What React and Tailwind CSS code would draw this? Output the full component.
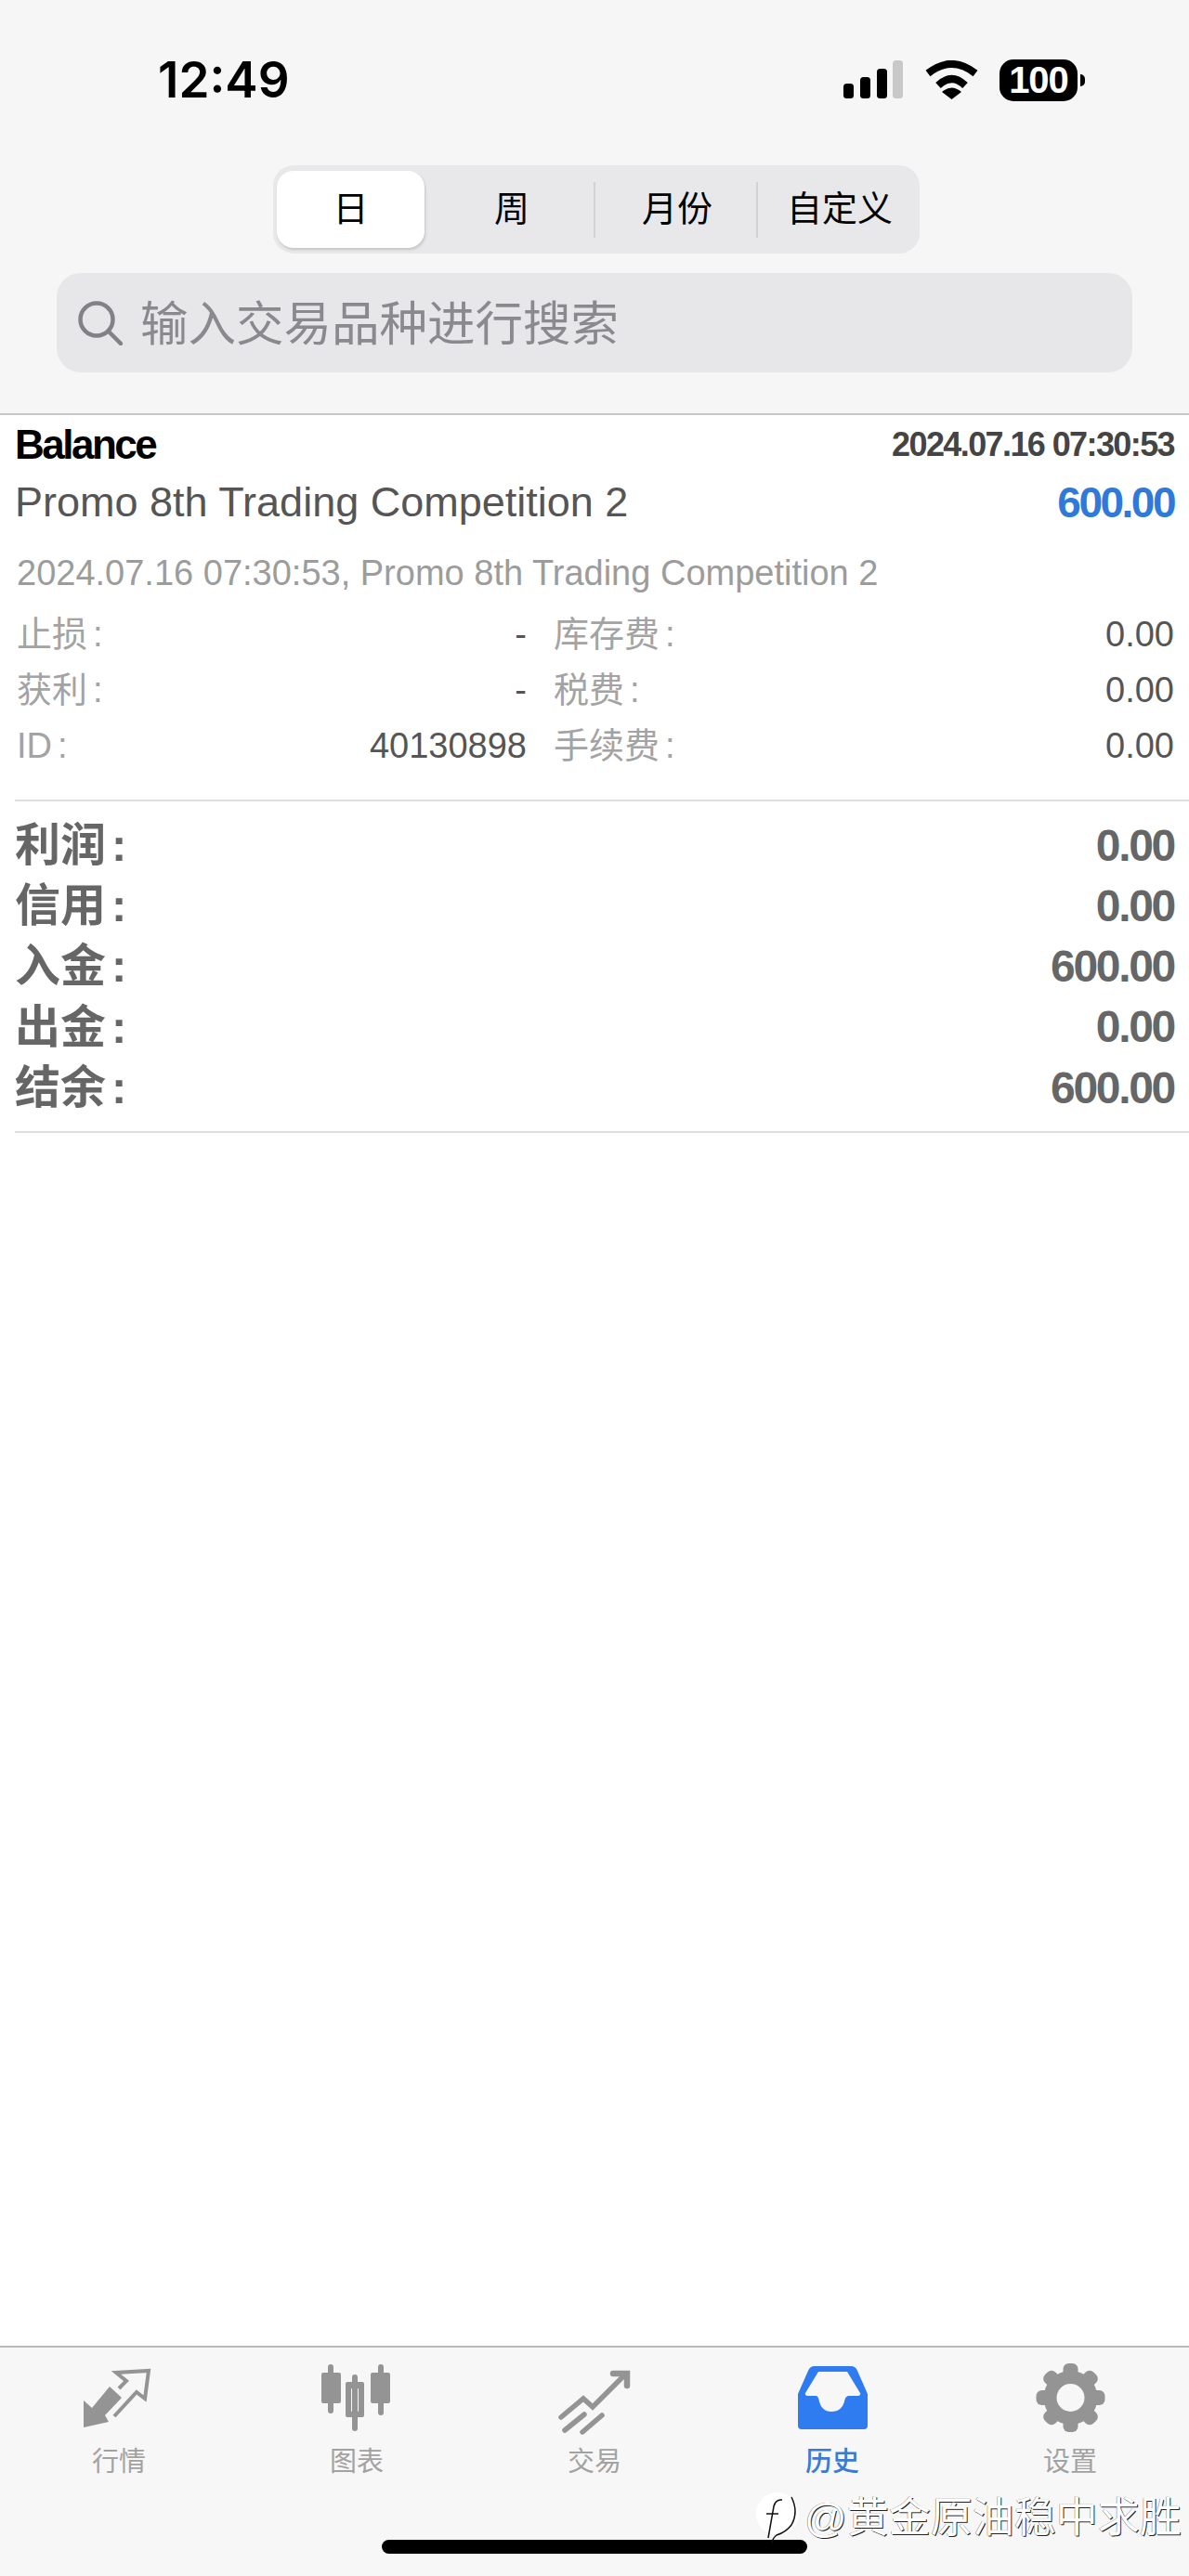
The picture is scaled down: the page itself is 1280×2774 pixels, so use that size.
const tabs = [
  { name: '行情', icon: QuotesIcon },
  { name: '图表', icon: ChartIcon },
  { name: '交易', icon: TradeIcon },
  { name: '历史', icon: HistoryIcon, active: true },
  { name: '设置', icon: GearIcon },
];

const details = [
  ['止损', '-', '库存费', '0.00'],
  ['获利', '-', '税费', '0.00'],
  ['ID', '40130898', '手续费', '0.00'],
];

const totals = [
  ['利润', '0.00'],
  ['信用', '0.00'],
  ['入金', '600.00'],
  ['出金', '0.00'],
  ['结余', '600.00'],
];

function QuotesIcon() {
  return (
    <svg width="100" height="85" viewBox="0 0 100 85" className="fill-[#949494]">
      <polygon points="40,30 53,42 35,61 39,68 12,74 12,45 21,53" />
      <polyline
        points="50,32 58,24 47,15 82,13 78,43 69,36 45,62"
        fill="none"
        stroke="#949494"
        strokeWidth="4"
      />
    </svg>
  );
}

function ChartIcon() {
  return (
    <svg width="100" height="85" viewBox="0 0 100 85" fill="#949494">
      <rect x="19" y="6" width="6" height="53" rx="3" />
      <rect x="12" y="15" width="21" height="33" rx="2" />
      <rect x="45" y="17" width="6" height="61" rx="3" />
      <path fillRule="evenodd" d="M40 25h16a2 2 0 0 1 2 2v34a2 2 0 0 1-2 2H40a2 2 0 0 1-2-2V27a2 2 0 0 1 2-2zm5 7a1 1 0 0 0-1 1v23a1 1 0 0 0 1 1h6a1 1 0 0 0 1-1V33a1 1 0 0 0-1-1z" />
      <rect x="73" y="6" width="6" height="55" rx="3" />
      <rect x="65" y="15" width="21" height="33" rx="2" />
    </svg>
  );
}

function TradeIcon() {
  return (
    <svg width="100" height="85" viewBox="0 0 100 85" fill="none" stroke="#949494" strokeWidth="5.500" strokeLinecap="round">
      <polyline points="14,63 38,43 48,52 82,18" strokeLinejoin="miter" />
      <polyline points="70,16 85,16 85,29" strokeWidth="6.500" />
      <line x1="18" y1="77" x2="39" y2="60" />
      <line x1="37" y1="79" x2="58" y2="61" />
    </svg>
  );
}

function HistoryIcon() {
  return (
    <svg width="75" height="68" viewBox="0 0 75 68" fill="#2f7bf0">
      <path
        fillRule="evenodd"
        d="M18 0H57Q62 0 64 5L75 30V64Q75 68 71 68H4Q0 68 0 64V30L11 5Q13 0 18 0ZM22 6L8 29Q7 31 10 32H20Q22 33 22.500 36Q25 49 36 49Q48 49 50.500 36Q51 33 54 32H65Q68 31 67 29L53 6Z"
      />
    </svg>
  );
}

function GearIcon() {
  return (
    <svg width="75" height="74" viewBox="-37.500 -37 75 74" fill="#949494">
      <circle r="29" />
      {[0, 45, 90, 135, 180, 225, 270, 315].map((deg) => (
        <rect key={deg} x="-8" y="-37" width="16" height="20" rx="6" transform={`rotate(${deg})`} />
      ))}
      <circle r="15" fill="#f7f7f7" />
    </svg>
  );
}

function StatusBar() {
  return (
    <div className="flex h-[48px] items-center pl-[170px] pr-[112px] mt-[62px]">
      <span className="text-[53px] leading-[48px] font-semibold text-black font-['Inter',sans-serif]">12:49</span>
      <svg className="ml-auto" width="65" height="42" viewBox="0 0 65 42">
        <rect x="0" y="25" width="11" height="16" rx="3.500" />
        <rect x="18" y="18" width="11" height="23" rx="3.500" />
        <rect x="36" y="9" width="11" height="32" rx="3.500" />
        <rect x="53" y="0" width="11" height="41" rx="3.500" fill="#c8c8c8" />
      </svg>
      <svg className="ml-[23px]" width="57" height="42" viewBox="0 0 57 42">
        <path d="M3 14Q28.500 -6 54 14" fill="none" stroke="#000" strokeWidth="8" />
        <path d="M14 27Q28.500 13 43 27" fill="none" stroke="#000" strokeWidth="8" />
        <path d="M18 34Q28.500 25 39 34L28.500 42Z" />
      </svg>
      <div className="ml-[23px] flex h-[45px] w-[84px] items-center justify-center rounded-[15px] bg-black text-[40px] font-bold tracking-[-1px] text-white font-['Liberation_Sans',sans-serif]">
        100
      </div>
      <div className="ml-[3px] h-[13px] w-[5px] rounded-r-full bg-black" />
    </div>
  );
}

function Segments() {
  return (
    <div className="ml-[294px] mt-[68px] flex h-[95px] w-[696px] items-center rounded-[22px] bg-[#e8e8ea] text-[38px] text-black">
      <div className="ml-[4px] flex h-[83px] w-[159px] items-center justify-center rounded-[18px] bg-white shadow-[1px_2px_3px_rgba(0,0,0,0.16)]">日</div>
      <div className="flex h-[60px] w-[184px] items-center justify-center border-r-2 border-[#d2d2d4] pl-[6px]">周</div>
      <div className="flex h-[60px] w-[175px] items-center justify-center border-r-2 border-[#d2d2d4] pl-[3px]">月份</div>
      <div className="flex h-[60px] flex-1 items-center justify-center pl-[2px]">自定义</div>
    </div>
  );
}

function SearchBox() {
  return (
    <div className="mx-[61px] mt-[21px] flex h-[107px] items-center rounded-[26px] bg-[#e7e7e9] pl-[23px]">
      <svg width="48" height="48" viewBox="0 0 48 48" fill="none" stroke="#828286" strokeWidth="4.500" strokeLinecap="round">
        <circle cx="20" cy="20" r="17.500" />
        <line x1="33" y1="33" x2="46" y2="46" />
      </svg>
      <span className="ml-[19px] mt-[4px] text-[51.500px] text-[#8a8a8e]">输入交易品种进行搜索</span>
    </div>
  );
}

function Deal() {
  return (
    <div className="px-[16px]">
      <div className="flex h-[64px] items-center justify-between">
        <span className="text-[44px] font-bold tracking-[-2.500px] text-black">Balance</span>
        <span className="text-[36px] font-bold tracking-[-1.600px] text-[#444]">2024.07.16 07:30:53</span>
      </div>
      <div className="flex h-[60px] items-center justify-between">
        <span className="text-[45px] text-[#555]">Promo 8th Trading Competition 2</span>
        <span className="text-[46px] font-bold tracking-[-2.500px] text-[#2f7ad9]">600.00</span>
      </div>
      <div className="mt-[22px] flex h-[48px] items-center pl-[2px] text-[38px] text-[#9c9c9c]">
        2024.07.16 07:30:53, Promo 8th Trading Competition 2
      </div>
      <div className="mt-[12px] grid grid-cols-[551px_668px] gap-x-[29px] text-[38px]">
        {details.map(([label, value, label2, value2]) => (
          <div key={label} className="contents">
            <div className="flex h-[60px] items-center justify-between pl-[2px]">
              <span className="text-[#a3a3a3]">{label}<span className="ml-[6px]">:</span></span>
              <span className="text-[#555]">{value}</span>
            </div>
            <div className="flex h-[60px] items-center justify-between">
              <span className="text-[#a3a3a3]">{label2}<span className="ml-[6px]">:</span></span>
              <span className="text-[#555]">{value2}</span>
            </div>
          </div>
        ))}
      </div>
    </div>
  );
}

function Totals() {
  return (
    <div className="ml-[16px] mt-[28px] border-y-2 border-[#dedede] pr-[16px] pt-[15px] pb-[14px]">
      {totals.map(([label, value]) => (
        <div key={label} className="flex h-[65.250px] items-center justify-between font-bold text-[#666]">
          <span className="text-[49px]">{label}<span className="ml-[6px]">:</span></span>
          <span className="text-[48px] tracking-[-2.300px]">{value}</span>
        </div>
      ))}
    </div>
  );
}

function TabBar() {
  return (
    <div className="relative h-[248px] border-t-2 border-[#b8b8b8] bg-[#f7f7f7]">
      <div className="grid grid-cols-5">
        {tabs.map((tab) => (
          <div key={tab.name} className="flex flex-col items-center">
            <div className="flex h-[108px] items-center justify-center">
              <tab.icon />
            </div>
            <div
              className={
                tab.active
                  ? 'text-[29px] leading-[30px] font-medium text-[#3a7bd5]'
                  : 'text-[29px] leading-[30px] text-[#a2a2a2]'
              }
            >
              {tab.name}
            </div>
          </div>
        ))}
      </div>
      <div className="absolute left-[411px] top-[207px] h-[15px] w-[458px] rounded-full bg-black" />
      <div className="absolute left-[812px] top-[150px] flex items-center">
        <svg width="54" height="58" viewBox="0 0 54 58" fill="none" stroke="#111" strokeWidth="1.500">
          <circle cx="25" cy="24" r="23" fill="#fff" stroke="none" />
          <path d="M40 6Q48 22 40 36Q34 44 24 47Q20 50 19 55" />
          <path d="M30 9Q23 8 21 16L15 50" />
          <path d="M13 24H26" />
        </svg>
        <span className="text-[45px] text-white [text-shadow:1px_1px_0_#222,-0.5px_0_0_#777]">@黄金原油稳中求胜</span>
      </div>
    </div>
  );
}

export default function App() {
  return (
    <div className="flex h-[2774px] w-[1280px] flex-col bg-white font-['Liberation_Sans','Noto_Sans_CJK_SC',sans-serif]">
      <div className="h-[447px] shrink-0 overflow-hidden border-b-2 border-[#c6c6c6] bg-[#f6f6f6]">
        <StatusBar />
        <Segments />
        <SearchBox />
      </div>
      <div className="flex-1">
        <Deal />
        <Totals />
      </div>
      <TabBar />
    </div>
  );
}
